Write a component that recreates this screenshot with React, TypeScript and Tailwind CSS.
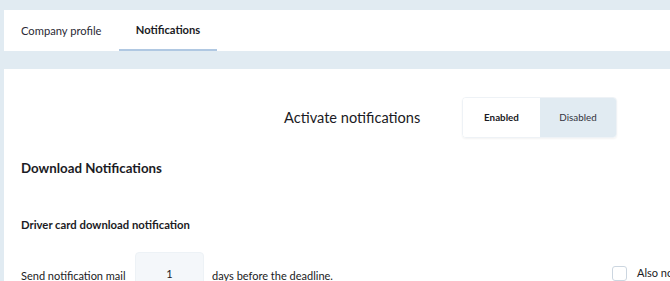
import React, { useState } from 'react';

const font = { fontFamily: '"Lato", "Noto Sans", sans-serif' };

export default function App() {
    const [enabled, setEnabled] = useState(true);
    const [tab, setTab] = useState('Notifications');

    return (
        <div className="w-[670px] h-[281px] overflow-hidden bg-[#e1ebf2] pt-[10px] pl-[4px] text-[#1b1b24]" style={font}>
            <div className="flex h-[41px] w-[900px] bg-white">
                <button
                    onClick={() => setTab('Company profile')}
                    className="h-full w-[115px] pl-[17px] pt-[2px] text-left text-[11.2px] text-[#2a2a35]"
                >
                    Company profile
                </button>
                <button
                    onClick={() => setTab('Notifications')}
                    className={`h-full w-[98px] pt-[2px] text-[11.2px] font-bold border-b-2 ${
                        tab === 'Notifications' ? 'border-[#b0c8e2]' : 'border-transparent'
                    }`}
                >
                    Notifications
                </button>
            </div>

            <div className="mt-[18px] w-[900px] bg-white pl-[17px]">
                <div className="flex items-center pt-[28px] pl-[263px]">
                    <span className="text-[14.6px] w-[178px]">Activate notifications</span>
                    <div className="flex h-[41px] rounded-[4px] border border-[#eef2f6] shadow-[0_1px_2px_rgba(0,0,0,0.05)] overflow-hidden text-[9.8px]">
                        <button
                            onClick={() => setEnabled(true)}
                            className={`w-[77px] ${enabled ? 'bg-white font-bold' : 'bg-[#e1ebf2] text-[#33333d]'}`}
                        >
                            Enabled
                        </button>
                        <button
                            onClick={() => setEnabled(false)}
                            className={`w-[76px] ${!enabled ? 'bg-white font-bold' : 'bg-[#e1ebf2] text-[#33333d]'}`}
                        >
                            Disabled
                        </button>
                    </div>
                </div>

                <h2 className="mt-[21px] text-[13.3px] font-bold">Download Notifications</h2>
                <h3 className="mt-[38px] text-[11.3px] font-bold">Driver card download notification</h3>

                <div className="mt-[18px] flex items-start text-[11px]">
                    <span className="mt-[16px] w-[114px] whitespace-nowrap">Send notification mail</span>
                    <input
                        defaultValue="1"
                        className="w-[69px] h-[40px] rounded-[4px] border border-[#edf2f6] bg-[#f4f7fa] pt-[3px] text-center text-[11px] outline-none"
                    />
                    <span className="mt-[16px] ml-[8px] w-[400px] whitespace-nowrap">days before the deadline.</span>
                    <label className="mt-[13px] flex items-center gap-[10px] whitespace-nowrap">
                        <input type="checkbox" className="appearance-none w-[15px] h-[15px] rounded-[3px] border border-[#ccd6e0] bg-white" />
                        <span>Also notify the driver</span>
                    </label>
                </div>
            </div>
        </div>
    );
}
